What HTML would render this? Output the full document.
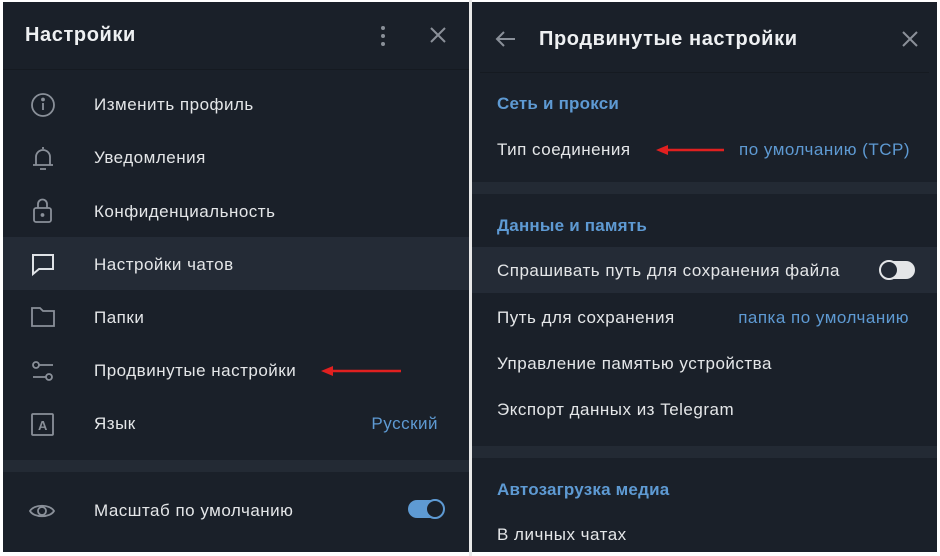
<!DOCTYPE html>
<html><head><meta charset="utf-8"><style>
*{margin:0;padding:0;box-sizing:border-box}
body{width:940px;height:556px;background:#fff;position:relative;overflow:hidden;font-family:"Liberation Sans",sans-serif;color:#e4e6e8}
.p{position:absolute;background:#1a2029;overflow:hidden}
.t{position:absolute;font-size:17px;letter-spacing:0.5px;white-space:nowrap;line-height:22px}
.b{color:#5e9ad3}
.h{font-weight:bold;font-size:20px;letter-spacing:0.6px;color:#eef0f2}
.sec{font-weight:bold;color:#5e9ad3;font-size:17px;letter-spacing:0.2px}
.band{position:absolute;left:0;right:0;background:#232a34}
.hov{position:absolute;left:0;right:0;background:#242b36}
svg{position:absolute}
</style></head><body>
<div class="p" style="left:3px;top:2px;width:466px;height:550px">
 <div style="position:absolute;left:0;right:0;top:67px;height:1px;background:#151a21"></div>
 <div class="t h" style="left:22px;top:22px">Настройки</div>
 <svg style="left:376px;top:22px" width="8" height="24"><circle cx="4" cy="4" r="2" fill="#8a9099"/><circle cx="4" cy="12" r="2" fill="#8a9099"/><circle cx="4" cy="20" r="2" fill="#8a9099"/></svg>
 <svg style="left:426px;top:24px" width="18" height="18" stroke="#8a9099" stroke-width="2"><path d="M2 2L16 16M16 2L2 16"/></svg>
 <div class="hov" style="top:235px;height:53px"></div>
 <div class="band" style="top:458px;height:12px"></div>
 <svg style="left:27px;top:90px" width="26" height="26" fill="none" stroke="#8a9099" stroke-width="1.8"><circle cx="13" cy="13" r="11"/><path d="M13 11v7"/><circle cx="13" cy="7.5" r="1" fill="#8a9099"/></svg>
 <svg style="left:27px;top:143px" width="26" height="28" fill="none" stroke="#8a9099" stroke-width="1.8"><path d="M13 2v2M6 20V12a7 7 0 0 1 14 0v8M3 20h20M10 24h6"/></svg>
 <svg style="left:27px;top:195px" width="26" height="28" fill="none" stroke="#8a9099" stroke-width="1.8"><rect x="4" y="11" width="17" height="14" rx="2"/><path d="M8 11V7a4.5 4.5 0 0 1 9 0v4"/><circle cx="12.5" cy="18" r="1" fill="#8a9099"/></svg>
 <svg style="left:27px;top:249px" width="26" height="26" fill="none" stroke="#dfe2e6" stroke-width="2"><path d="M3 4h20v14H9l-6 5z"/></svg>
 <svg style="left:27px;top:303px" width="26" height="24" fill="none" stroke="#8a9099" stroke-width="1.8"><path d="M2 3h8l3 3h11v15H2z"/></svg>
 <svg style="left:27px;top:357px" width="26" height="26" fill="none" stroke="#8a9099" stroke-width="1.8"><circle cx="6" cy="6" r="3"/><path d="M9 6h14M3 18h13"/><circle cx="19" cy="18" r="3"/></svg>
 <svg style="left:27px;top:410px" width="26" height="26" fill="none" stroke="#8a9099" stroke-width="1.8"><rect x="2" y="2" width="21" height="21" rx="1"/><text x="8" y="18" font-size="13" font-weight="bold" fill="#8a9099" stroke="none" font-family="Liberation Sans">A</text></svg>
 <svg style="left:25px;top:498px" width="28" height="22" fill="none" stroke="#8a9099" stroke-width="1.8"><path d="M2 11C6 4 22 4 26 11C22 18 6 18 2 11z"/><circle cx="14" cy="11" r="4"/></svg>
 <div class="t" style="left:91px;top:92px">Изменить профиль</div>
 <div class="t" style="left:91px;top:145px">Уведомления</div>
 <div class="t" style="left:91px;top:199px">Конфиденциальность</div>
 <div class="t" style="left:91px;top:252px">Настройки чатов</div>
 <div class="t" style="left:91px;top:305px">Папки</div>
 <div class="t" style="left:91px;top:358px">Продвинутые настройки</div>
 <svg style="left:318px;top:363px" width="82" height="12"><path d="M8 6H80" stroke="#e02020" stroke-width="2.5"/><path d="M0 6L12 1L12 11z" fill="#e02020"/></svg>
 <div class="t" style="left:91px;top:411px">Язык</div>
 <div class="t b" style="right:31px;top:411px">Русский</div>
 <div class="t" style="left:91px;top:498px">Масштаб по умолчанию</div>
 <div style="position:absolute;left:405px;top:498px;width:34px;height:18px;border-radius:9px;background:#5e9ad3"></div>
 <div style="position:absolute;left:422px;top:497px;width:20px;height:20px;border-radius:50%;background:#1a2029;border:2.5px solid #5e9ad3"></div>
</div>
<div style="position:absolute;left:469px;top:0;width:3px;height:556px;background:#e8e8e8"></div>
<div class="p" style="left:472px;top:2px;width:465px;height:550px">
 <div style="position:absolute;left:8px;right:8px;top:70px;height:1px;background:#151a21"></div>
 <svg style="left:22px;top:28px" width="22" height="18" fill="none" stroke="#8a9099" stroke-width="2"><path d="M21 9H3M10 2L3 9l7 7"/></svg>
 <div class="t h" style="left:67px;top:26px">Продвинутые настройки</div>
 <svg style="left:429px;top:28px" width="18" height="18" stroke="#8a9099" stroke-width="2"><path d="M2 2L16 16M16 2L2 16"/></svg>
 <div class="t sec" style="left:25px;top:91px">Сеть и прокси</div>
 <div class="t" style="left:25px;top:137px">Тип соединения</div>
 <svg style="left:184px;top:142px" width="70" height="12"><path d="M8 6H68" stroke="#e02020" stroke-width="2.5"/><path d="M0 6L12 1L12 11z" fill="#e02020"/></svg>
 <div class="t b" style="right:27px;top:137px">по умолчанию (TCP)</div>
 <div class="band" style="top:180px;height:12px"></div>
 <div class="t sec" style="left:25px;top:213px">Данные и память</div>
 <div class="hov" style="top:245px;height:46px"></div>
 <div class="t" style="left:25px;top:258px">Спрашивать путь для сохранения файла</div>
 <div style="position:absolute;left:409px;top:259px;width:34px;height:18px;border-radius:9px;background:#e4e6e8"></div>
 <div style="position:absolute;left:407px;top:258px;width:20px;height:20px;border-radius:50%;background:#242b36;border:2.5px solid #e4e6e8"></div>
 <div class="t" style="left:25px;top:305px">Путь для сохранения</div>
 <div class="t b" style="right:28px;top:305px">папка по умолчанию</div>
 <div class="t" style="left:25px;top:351px">Управление памятью устройства</div>
 <div class="t" style="left:25px;top:397px">Экспорт данных из Telegram</div>
 <div class="band" style="top:444px;height:12px"></div>
 <div class="t sec" style="left:25px;top:477px">Автозагрузка медиа</div>
 <div class="t" style="left:25px;top:522px">В личных чатах</div>
</div>
</body></html>
